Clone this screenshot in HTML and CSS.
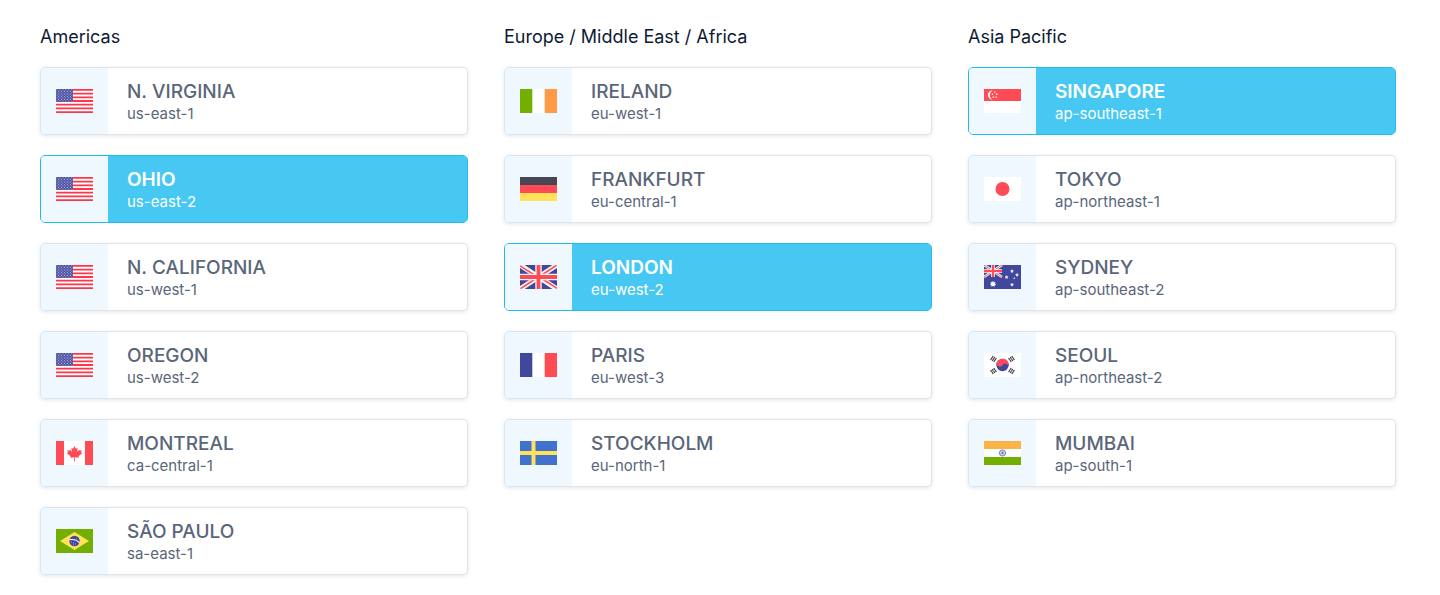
FILE: index.html
```
<!DOCTYPE html>
<html lang="en">
<head>
<meta charset="utf-8">
<meta name="viewport" content="width=device-width, initial-scale=1">
<title>Regions</title>
<link rel="stylesheet" href="styles.css">
</head>
<body>
<svg class="sprite" aria-hidden="true">
  <defs>
    <pattern id="stars" width="3" height="3" patternUnits="userSpaceOnUse">
      <rect width="3" height="3" fill="#41479b"/>
      <circle cx="0.9" cy="0.9" r="0.6" fill="#c9cbe6"/>
      <circle cx="2.4" cy="2.4" r="0.6" fill="#c9cbe6"/>
    </pattern>
    <symbol id="us" viewBox="0 0 37 26" preserveAspectRatio="none">
      <rect width="37" height="26" fill="#fff"/>
      <path d="M0 1h37M0 5h37M0 9h37M0 13h37M0 17h37M0 21h37M0 25h37" stroke="#ff3548" stroke-width="2"/>
      <rect width="17" height="14" fill="url(#stars)"/>
    </symbol>
    <symbol id="ca" viewBox="0 0 37 24">
      <rect width="37" height="24" fill="#fff"/>
      <path d="M0 0h8v24H0zM29 0h8v24h-8z" fill="#ff4b55"/>
      <path d="M18.500 5l1.500 2.700 1.700-.9-.7 4 2.200-2.200.5 1.100 2.100-.4-.7 2.200 1.100.7-3.700 3 .4 1.500-4-.5.100 4.300h-.9l.100-4.300-4 .5.4-1.500-3.700-3 1.100-.7-.7-2.200 2.100.4.500-1.100 2.200 2.200-.7-4 1.700.9z" fill="#ff4b55"/>
    </symbol>
    <symbol id="br" viewBox="0 0 37 24">
      <rect width="37" height="24" fill="#73af00"/>
      <path d="M18.500 3L33 12l-14.500 9L4 12z" fill="#ffe15a"/>
      <circle cx="18.500" cy="12" r="5.200" fill="#41479b"/>
      <path d="M13.600 10.700c4-.7 7.500.4 9.900 3.100" fill="none" stroke="#fff" stroke-width="1.200"/>
      <path d="M15 13h1M17 14h1M19 15h1M17 16h1M20 10h1" stroke="#c9cbe6" stroke-width=".7"/>
    </symbol>
    <symbol id="ie" viewBox="0 0 37 24">
      <rect width="37" height="24" fill="#fff"/>
      <path d="M0 0h12.300v24H0z" fill="#73af00"/>
      <path d="M24.700 0H37v24H24.700z" fill="#ff9b47"/>
    </symbol>
    <symbol id="de" viewBox="0 0 37 24">
      <rect width="37" height="8" fill="#464655"/>
      <rect y="8" width="37" height="8" fill="#ff4b55"/>
      <rect y="16" width="37" height="8" fill="#ffe15a"/>
    </symbol>
    <symbol id="gb" viewBox="0 0 37 24">
      <rect width="37" height="24" fill="#41479b"/>
      <path d="M0 0l37 24M37 0L0 24" stroke="#f5f5f5" stroke-width="5"/>
      <path d="M0 .8L16 11M21 13l16 10.300M36.500 .3L21 10.500M16 13.500L.5 23.700" stroke="#ff4b55" stroke-width="1.500"/>
      <path d="M18.500 0v24M0 12h37" stroke="#f5f5f5" stroke-width="6.400"/>
      <path d="M18.500 0v24M0 12h37" stroke="#ff4b55" stroke-width="3.800"/>
    </symbol>
    <symbol id="fr" viewBox="0 0 37 24">
      <rect width="37" height="24" fill="#fff"/>
      <path d="M0 0h12.300v24H0z" fill="#41479b"/>
      <path d="M24.700 0H37v24H24.700z" fill="#ff4b55"/>
    </symbol>
    <symbol id="se" viewBox="0 0 37 24">
      <rect width="37" height="24" fill="#4173cd"/>
      <path d="M13.500 0v24M0 12h37" stroke="#ffe15a" stroke-width="4"/>
    </symbol>
    <symbol id="sg" viewBox="0 0 37 24">
      <rect width="37" height="24" fill="#fff"/>
      <rect width="37" height="12" fill="#ff4b55"/>
      <path d="M8.500 1.500a4.600 4.600 0 1 0 0 9.200 5.200 5.200 0 0 1 0-9.200z" fill="#fff"/>
      <path d="M10 2.500h1.400v1.300H10zM7.700 4.600h1.400v1.300H7.700zM12 4.600h1.400v1.300H12zM8.600 7.400H10v1.300H8.600zM11.400 7.400h1.400v1.300h-1.400z" fill="#fff"/>
    </symbol>
    <symbol id="jp" viewBox="0 0 37 24">
      <rect width="37" height="24" fill="#fff"/>
      <circle cx="18.500" cy="12" r="7" fill="#ff4b55"/>
    </symbol>
    <symbol id="au" viewBox="0 0 37 24">
      <rect width="37" height="24" fill="#41479b"/>
      <path d="M0 0l18 12M18 0L0 12" stroke="#f5f5f5" stroke-width="2.600"/>
      <path d="M0 0l18 12M18 0L0 12" stroke="#ff4b55" stroke-width=".9"/>
      <path d="M9 0v12M0 6h18" stroke="#f5f5f5" stroke-width="3.600"/>
      <path d="M9 0v12M0 6h18" stroke="#ff4b55" stroke-width="2"/>
      <path d="M9 16l.7 1.400 1.500-.3-.4 1.400 1.200.9-1.400.5-.1 1.500-1.500-.7-1.500.7-.1-1.500-1.400-.5 1.200-.9-.4-1.400 1.500.3z" fill="#fff" stroke="#fff" stroke-width=".3"/>
      <path d="M28 4.500l.5 1 1.100.2-.8.700.2 1.200-1-.6-1 .6.200-1.200-.8-.7 1.100-.2zM22.600 10.500l.5 1 1.100.2-.8.700.2 1.200-1-.6-1 .6.200-1.200-.8-.7 1.100-.2zM33 8.200l.5 1 1.100.2-.8.700.2 1.200-1-.6-1 .6.200-1.200-.8-.7 1.100-.2zM28 18l.5 1 1.100.2-.8.700.2 1.200-1-.6-1 .6.200-1.200-.8-.7 1.100-.2z" fill="#fff" stroke="#fff" stroke-width=".3"/>
      <circle cx="30.300" cy="13.300" r=".8" fill="#fff"/>
    </symbol>
    <symbol id="kr" viewBox="0 0 37 24">
      <rect width="37" height="24" fill="#fff"/>
      <circle cx="18.500" cy="12" r="6.200" fill="#41479b"/>
      <path d="M13.300 8.600a6.200 6.200 0 0 1 10.400 6.800 3.100 3.100 0 0 0-5.200-3.400 3.100 3.100 0 0 1-5.200-3.400z" fill="#ff4b55"/>
      <g stroke="#464655" stroke-width="1.300">
        <path d="M6.600 7l2.600-4M8.200 8l2.600-4M9.800 9l2.600-4"/>
        <path d="M30.400 7l-2.600-4M28.800 8l-2.600-4M27.200 9l-2.600-4" stroke-dasharray="2.200 .4"/>
        <path d="M6.600 17l2.600 4M8.200 16l2.600 4M9.800 15l2.600 4" stroke-dasharray="2.200 .4"/>
        <path d="M30.400 17l-2.600 4M28.800 16l-2.600 4M27.200 15l-2.600 4" stroke-dasharray="2.200 .4"/>
      </g>
    </symbol>
    <symbol id="in" viewBox="0 0 37 24">
      <rect width="37" height="24" fill="#fff"/>
      <rect width="37" height="8" fill="#fab446"/>
      <rect y="16" width="37" height="8" fill="#73af00"/>
      <circle cx="18.500" cy="12" r="3.100" fill="#e3e4f3" stroke="#7d81bd" stroke-width="1"/>
      <path d="M18.500 9v6M15.500 12h6M16.400 9.900l4.200 4.200M20.600 9.900l-4.200 4.200" stroke="#7d81bd" stroke-width=".4"/>
      <circle cx="18.500" cy="12" r="1" fill="#6a6fb3"/>
    </symbol>
  </defs>
</svg>

<main class="regions">
  <section class="group" aria-labelledby="americas">
    <h2 class="group-title" id="americas">Americas</h2>
    <button class="region" type="button" aria-pressed="false"><span class="region-flag"><svg class="flag"><use href="#us"/></svg></span><span class="region-text"><span class="region-name">N. VIRGINIA</span><span class="region-code">us-east-1</span></span></button>
    <button class="region" type="button" aria-pressed="true"><span class="region-flag"><svg class="flag"><use href="#us"/></svg></span><span class="region-text"><span class="region-name">OHIO</span><span class="region-code">us-east-2</span></span></button>
    <button class="region" type="button" aria-pressed="false"><span class="region-flag"><svg class="flag"><use href="#us"/></svg></span><span class="region-text"><span class="region-name">N. CALIFORNIA</span><span class="region-code">us-west-1</span></span></button>
    <button class="region" type="button" aria-pressed="false"><span class="region-flag"><svg class="flag"><use href="#us"/></svg></span><span class="region-text"><span class="region-name">OREGON</span><span class="region-code">us-west-2</span></span></button>
    <button class="region" type="button" aria-pressed="false"><span class="region-flag"><svg class="flag"><use href="#ca"/></svg></span><span class="region-text"><span class="region-name">MONTREAL</span><span class="region-code">ca-central-1</span></span></button>
    <button class="region" type="button" aria-pressed="false"><span class="region-flag"><svg class="flag"><use href="#br"/></svg></span><span class="region-text"><span class="region-name">SÃO PAULO</span><span class="region-code">sa-east-1</span></span></button>
  </section>
  <section class="group" aria-labelledby="emea">
    <h2 class="group-title" id="emea">Europe / Middle East / Africa</h2>
    <button class="region" type="button" aria-pressed="false"><span class="region-flag"><svg class="flag"><use href="#ie"/></svg></span><span class="region-text"><span class="region-name">IRELAND</span><span class="region-code">eu-west-1</span></span></button>
    <button class="region" type="button" aria-pressed="false"><span class="region-flag"><svg class="flag"><use href="#de"/></svg></span><span class="region-text"><span class="region-name">FRANKFURT</span><span class="region-code">eu-central-1</span></span></button>
    <button class="region" type="button" aria-pressed="true"><span class="region-flag"><svg class="flag"><use href="#gb"/></svg></span><span class="region-text"><span class="region-name">LONDON</span><span class="region-code">eu-west-2</span></span></button>
    <button class="region" type="button" aria-pressed="false"><span class="region-flag"><svg class="flag"><use href="#fr"/></svg></span><span class="region-text"><span class="region-name">PARIS</span><span class="region-code">eu-west-3</span></span></button>
    <button class="region" type="button" aria-pressed="false"><span class="region-flag"><svg class="flag"><use href="#se"/></svg></span><span class="region-text"><span class="region-name">STOCKHOLM</span><span class="region-code">eu-north-1</span></span></button>
  </section>
  <section class="group" aria-labelledby="apac">
    <h2 class="group-title" id="apac">Asia Pacific</h2>
    <button class="region" type="button" aria-pressed="true"><span class="region-flag"><svg class="flag"><use href="#sg"/></svg></span><span class="region-text"><span class="region-name">SINGAPORE</span><span class="region-code">ap-southeast-1</span></span></button>
    <button class="region" type="button" aria-pressed="false"><span class="region-flag"><svg class="flag"><use href="#jp"/></svg></span><span class="region-text"><span class="region-name">TOKYO</span><span class="region-code">ap-northeast-1</span></span></button>
    <button class="region" type="button" aria-pressed="false"><span class="region-flag"><svg class="flag"><use href="#au"/></svg></span><span class="region-text"><span class="region-name">SYDNEY</span><span class="region-code">ap-southeast-2</span></span></button>
    <button class="region" type="button" aria-pressed="false"><span class="region-flag"><svg class="flag"><use href="#kr"/></svg></span><span class="region-text"><span class="region-name">SEOUL</span><span class="region-code">ap-northeast-2</span></span></button>
    <button class="region" type="button" aria-pressed="false"><span class="region-flag"><svg class="flag"><use href="#in"/></svg></span><span class="region-text"><span class="region-name">MUMBAI</span><span class="region-code">ap-south-1</span></span></button>
  </section>
</main>
</body>
</html>
```
FILE: styles.css
```
* {
  box-sizing: border-box;
}

body {
  margin: 0;
  background: #fff;
  color: #0d1a33;
  font-family: Inter, "Liberation Sans", sans-serif;
}

.sprite {
  position: absolute;
  width: 0;
  height: 0;
}

.regions {
  display: grid;
  grid-template-columns: repeat(3, 1fr);
  column-gap: 36px;
  align-items: start;
  padding: 27px 44px 20px 40px;
}

.group {
  display: flex;
  flex-direction: column;
  gap: 20px;
}

.group-title {
  margin: 0;
  font-size: 18px;
  font-weight: 400;
  line-height: 20px;
}

.region {
  display: flex;
  align-items: stretch;
  min-height: 68px;
  padding: 0;
  overflow: hidden;
  border: 1px solid #dde4ed;
  border-radius: 5px;
  background: #fff;
  box-shadow: 0 1px 4px rgba(0, 0, 0, 0.1);
  color: #5a6679;
  font-family: inherit;
  text-align: left;
  cursor: pointer;
}

.region-flag {
  display: flex;
  align-items: center;
  justify-content: center;
  width: 67px;
  background: #eff7ff;
}

.flag {
  display: block;
  width: 37px;
  height: 24px;
}

.region-text {
  display: flex;
  flex: 1;
  flex-direction: column;
  justify-content: center;
  padding: 2px 19px 0;
}

.region-name {
  font-size: 19px;
  font-weight: 500;
  line-height: 24px;
}

.region-code {
  font-size: 15px;
  line-height: 20px;
}

.region[aria-pressed="true"] {
  border-color: #1fbcf0;
  box-shadow: none;
  color: #fff;
}

.region[aria-pressed="true"] .region-text {
  background: #46c8f3;
}

.region[aria-pressed="true"] .region-name {
  font-weight: 600;
}
```
